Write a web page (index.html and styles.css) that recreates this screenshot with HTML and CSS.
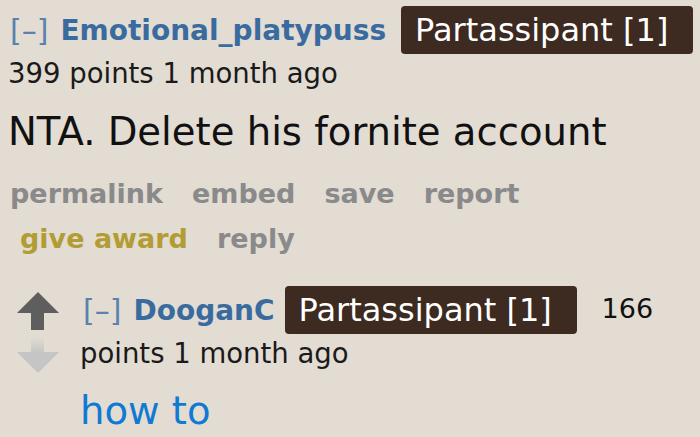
FILE: index.html
```html
<!DOCTYPE html>
<html>
<head>
<meta charset="utf-8">
<link rel="stylesheet" href="styles.css">
</head>
<body>
<div class="comment">
  <div class="tagline">
    <span class="expand">[–]</span>
    <span class="author">Emotional_platypuss</span>
    <span class="flair">Partassipant [1]</span>
  </div>
  <div class="meta">399 points 1 month ago</div>
  <div class="md">NTA. Delete his fornite account</div>
  <ul class="buttons">
    <li>permalink</li>
    <li>embed</li>
    <li>save</li>
    <li>report</li>
    <li class="gold first-wrap">give award</li>
    <li>reply</li>
  </ul>
  <div class="child">
    <div class="votes">
      <svg width="42" height="82" viewBox="0 0 42 82">
        <defs>
          <linearGradient id="fade" x1="0" y1="0" x2="0" y2="1">
            <stop offset="0" stop-color="#e2dcd3"/>
            <stop offset="1" stop-color="#c5c5c5"/>
          </linearGradient>
        </defs>
        <polygon points="21,0 42,21 0,21" fill="#5e5e5e"/>
        <rect x="14" y="20" width="13" height="18" fill="#5e5e5e"/>
        <rect x="14" y="45" width="13" height="16" fill="url(#fade)"/>
        <polygon points="0,60 42,60 21,81" fill="#c5c5c5"/>
      </svg>
    </div>
    <div class="entry">
      <div class="tagline child-tag">
        <span class="expand">[–]</span>
        <span class="author">DooganC</span>
        <span class="flair">Partassipant [1]</span>
        <span class="score">166</span>
      </div>
      <div class="meta">points 1 month ago</div>
      <div class="md link">how to</div>
    </div>
  </div>
</div>
</body>
</html>
```

FILE: styles.css
```css
html, body {
  margin: 0;
  padding: 0;
  background: #e2dcd3;
}
body {
  font-family: "DejaVu Sans", Verdana, sans-serif;
  color: #1a1a1a;
  width: 700px;
  height: 437px;
  overflow: hidden;
}
.comment {
  padding: 6px 0 0 8px;
}
.tagline {
  display: flex;
  align-items: center;
  height: 48px;
  font-size: 28px;
  white-space: nowrap;
}
.expand {
  color: #5b82ad;
  font-size: 30px;
  margin-left: 2px;
  margin-right: 12px;
}
.author {
  color: #3a6b9f;
  font-weight: bold;
  margin-right: 15px;
}
.flair {
  background: #3d2a21;
  color: #ffffff;
  font-size: 32px;
  height: 48px;
  line-height: 48px;
  width: 292px;
  box-sizing: border-box;
  padding-left: 14px;
  border-radius: 4px;
}
.score {
  font-size: 27px;
  margin-left: 25px;
  margin-top: -4px;
  color: #111;
}
.meta {
  font-size: 27.5px;
  line-height: 30px;
  margin-top: 4px;
  color: #1a1a1a;
}
.md {
  font-size: 38.6px;
  line-height: 44px;
  margin-top: 22px;
  color: #111;
}
.buttons {
  list-style: none;
  margin: 17px 0 0 0;
  padding: 0 0 0 2px;
  display: flex;
  flex-wrap: wrap;
  width: 560px;
  column-gap: 29px;
  font-size: 27px;
  font-weight: bold;
  line-height: 45px;
  color: #8a8a8a;
}
.buttons .gold {
  color: #b29d35;
}
.buttons .first-wrap {
  margin-left: 10px;
}
.child {
  display: flex;
  margin-top: 25px;
  margin-left: 9px;
}
.votes {
  width: 42px;
  padding-top: 6px;
}
.votes svg {
  display: block;
}
.entry {
  margin-left: 21px;
}
.child-tag .expand {
  margin-left: 3px;
}
.child-tag .author {
  margin-right: 10px;
}
.link {
  color: #1079d2;
  margin-top: 21px;
}
```
